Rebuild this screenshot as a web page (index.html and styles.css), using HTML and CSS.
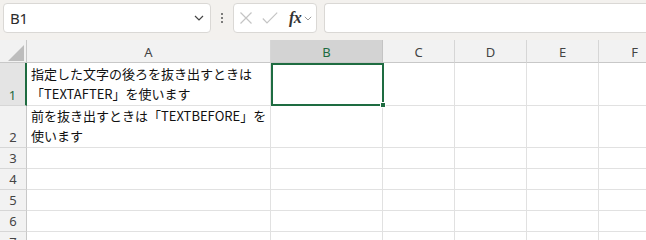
FILE: index.html
```html
<!DOCTYPE html>
<html lang="ja">
<head>
<meta charset="utf-8">
<link rel="stylesheet" href="styles.css">
</head>
<body>
<div class="toolbar">
  <div class="namebox">
    <span class="name">B1</span>
    <svg class="chev" width="10" height="6" viewBox="0 0 10 6"><path d="M1 1 L5 5 L9 1" fill="none" stroke="#444" stroke-width="1.2"/></svg>
  </div>
  <div class="dots"><i></i><i></i><i></i></div>
  <div class="fxbox">
    <svg class="ico" width="14" height="12" viewBox="0 0 14 12"><path d="M1.5 0.5 L12.5 11.5 M12.5 0.5 L1.5 11.5" stroke="#c4c4c4" stroke-width="1.2" fill="none"/></svg>
    <svg class="ico" width="16" height="12" viewBox="0 0 16 12"><path d="M0.8 6.5 L5 10.8 L15.2 0.6" stroke="#c4c4c4" stroke-width="1.2" fill="none"/></svg>
    <span class="fx">fx</span>
    <svg class="chev small" width="8" height="5" viewBox="0 0 8 5"><path d="M0.8 0.8 L4 4 L7.2 0.8" fill="none" stroke="#999" stroke-width="1"/></svg>
  </div>
  <div class="formula"></div>
</div>
<div class="sheet">
  <div class="corner"><div class="tri"></div></div>
  <div class="ch">A</div>
  <div class="ch sel">B</div>
  <div class="ch">C</div>
  <div class="ch">D</div>
  <div class="ch">E</div>
  <div class="ch">F</div>

  <div class="rh sel">1</div>
  <div class="cell text">指定した文字の後ろを抜き出すときは<br>「TEXTAFTER」を使います</div>
  <div class="cell active"><span class="handle"></span></div>
  <div class="cell"></div><div class="cell"></div><div class="cell"></div><div class="cell"></div>

  <div class="rh">2</div>
  <div class="cell text">前を抜き出すときは「TEXTBEFORE」を<br>使います</div>
  <div class="cell"></div><div class="cell"></div><div class="cell"></div><div class="cell"></div><div class="cell"></div>

  <div class="rh">3</div>
  <div class="cell"></div><div class="cell"></div><div class="cell"></div><div class="cell"></div><div class="cell"></div><div class="cell"></div>
  <div class="rh">4</div>
  <div class="cell"></div><div class="cell"></div><div class="cell"></div><div class="cell"></div><div class="cell"></div><div class="cell"></div>
  <div class="rh">5</div>
  <div class="cell"></div><div class="cell"></div><div class="cell"></div><div class="cell"></div><div class="cell"></div><div class="cell"></div>
  <div class="rh">6</div>
  <div class="cell"></div><div class="cell"></div><div class="cell"></div><div class="cell"></div><div class="cell"></div><div class="cell"></div>
  <div class="rh">7</div>
  <div class="cell"></div><div class="cell"></div><div class="cell"></div><div class="cell"></div><div class="cell"></div><div class="cell"></div>
</div>
</body>
</html>
```
FILE: styles.css
```css
* { box-sizing: border-box; }
html, body { margin: 0; padding: 0; }
body {
  width: 646px;
  height: 240px;
  overflow: hidden;
  background: #ffffff;
  font-family: "Noto Sans", "Noto Sans CJK JP", sans-serif;
}
.toolbar {
  height: 40px;
  background: #f3f1ee;
  display: flex;
  align-items: flex-start;
  padding: 3px 0 0 3px;
}
.namebox {
  width: 208px;
  height: 30px;
  background: #fff;
  border: 1px solid #dad8d5;
  border-radius: 4px;
  display: flex;
  align-items: center;
  justify-content: space-between;
  padding: 0 6px 0 6px;
}
.name {
  font-size: 15px;
  color: #2b2b2b;
  letter-spacing: -0.2px;
}
.chev { display: block; }
.dots {
  width: 22px;
  height: 30px;
  display: flex;
  flex-direction: column;
  align-items: center;
  justify-content: center;
  gap: 2px;
}
.dots i {
  display: block;
  width: 2px;
  height: 2px;
  background: #555;
  border-radius: 1px;
}
.fxbox {
  width: 84px;
  height: 30px;
  background: #fff;
  border: 1px solid #dad8d5;
  border-radius: 4px;
  display: flex;
  align-items: center;
  padding: 0 0 0 5px;
  gap: 0;
}
.fxbox .ico { display: block; margin-right: 9px; }
.fxbox .ico + .ico { margin-right: 11px; }
.fx {
  font-family: "Liberation Serif", "DejaVu Serif", serif;
  font-style: italic;
  font-weight: bold;
  font-size: 16px;
  color: #333;
  letter-spacing: -0.5px;
  margin-right: 3px;
  line-height: 1;
}
.formula {
  margin-left: 7px;
  flex: 1;
  height: 30px;
  background: #fff;
  border: 1px solid #dad8d5;
  border-right: none;
  border-radius: 4px 0 0 4px;
}

.sheet {
  display: grid;
  grid-template-columns: 27px 244px 112px 72px 72px 72px 72px;
  grid-template-rows: 23px 43px 42px 21px 21px 21px 21px 21px;
  width: 671px;
}
.corner {
  background: #f2f2f2;
  border-right: 1px solid #c8c8c8;
  border-bottom: 1px solid #c8c8c8;
  position: relative;
}
.tri {
  position: absolute;
  left: 8px;
  top: 5px;
  width: 16px;
  height: 16px;
  background: #bdbdbd;
  clip-path: polygon(100% 0, 100% 100%, 0 100%);
}
.ch {
  background: #f2f2f2;
  border-right: 1px solid #d6d6d6;
  border-bottom: 1px solid #c8c8c8;
  font-size: 13px;
  color: #444;
  display: flex;
  align-items: center;
  justify-content: center;
  padding-top: 1px;
}
.ch.sel {
  background: #d3d3d3;
  color: #1d6b3f;
  border-right-color: #c4c4c4;
}
.rh {
  background: #f2f2f2;
  border-right: 1px solid #c8c8c8;
  border-bottom: 1px solid #d6d6d6;
  font-size: 13px;
  color: #444;
  display: flex;
  align-items: flex-end;
  justify-content: center;
  padding-bottom: 1px;
  line-height: 18px;
}
.rh.sel {
  background: #e4e4e4;
  color: #1d6b3f;
  border-right: 2px solid #1e6c41;
}
.cell {
  border-right: 1px solid #e1e1e1;
  border-bottom: 1px solid #e1e1e1;
  background: #fff;
}
.cell.text {
  font-family: "Noto Sans CJK JP", sans-serif;
  font-size: 13px;
  line-height: 20px;
  color: #111;
  padding: 0 0 1px 4px;
  display: flex;
  align-items: flex-end;
  white-space: nowrap;
}
.cell.active {
  position: relative;
}
.cell.active::after {
  content: "";
  position: absolute;
  left: 0;
  top: 0;
  right: -2px;
  bottom: -1px;
  border: 2px solid #1e6c41;
}
.handle {
  position: absolute;
  right: -4px;
  bottom: -3px;
  width: 6px;
  height: 6px;
  background: #1e6c41;
  border: 1px solid #fff;
  z-index: 2;
}
```
